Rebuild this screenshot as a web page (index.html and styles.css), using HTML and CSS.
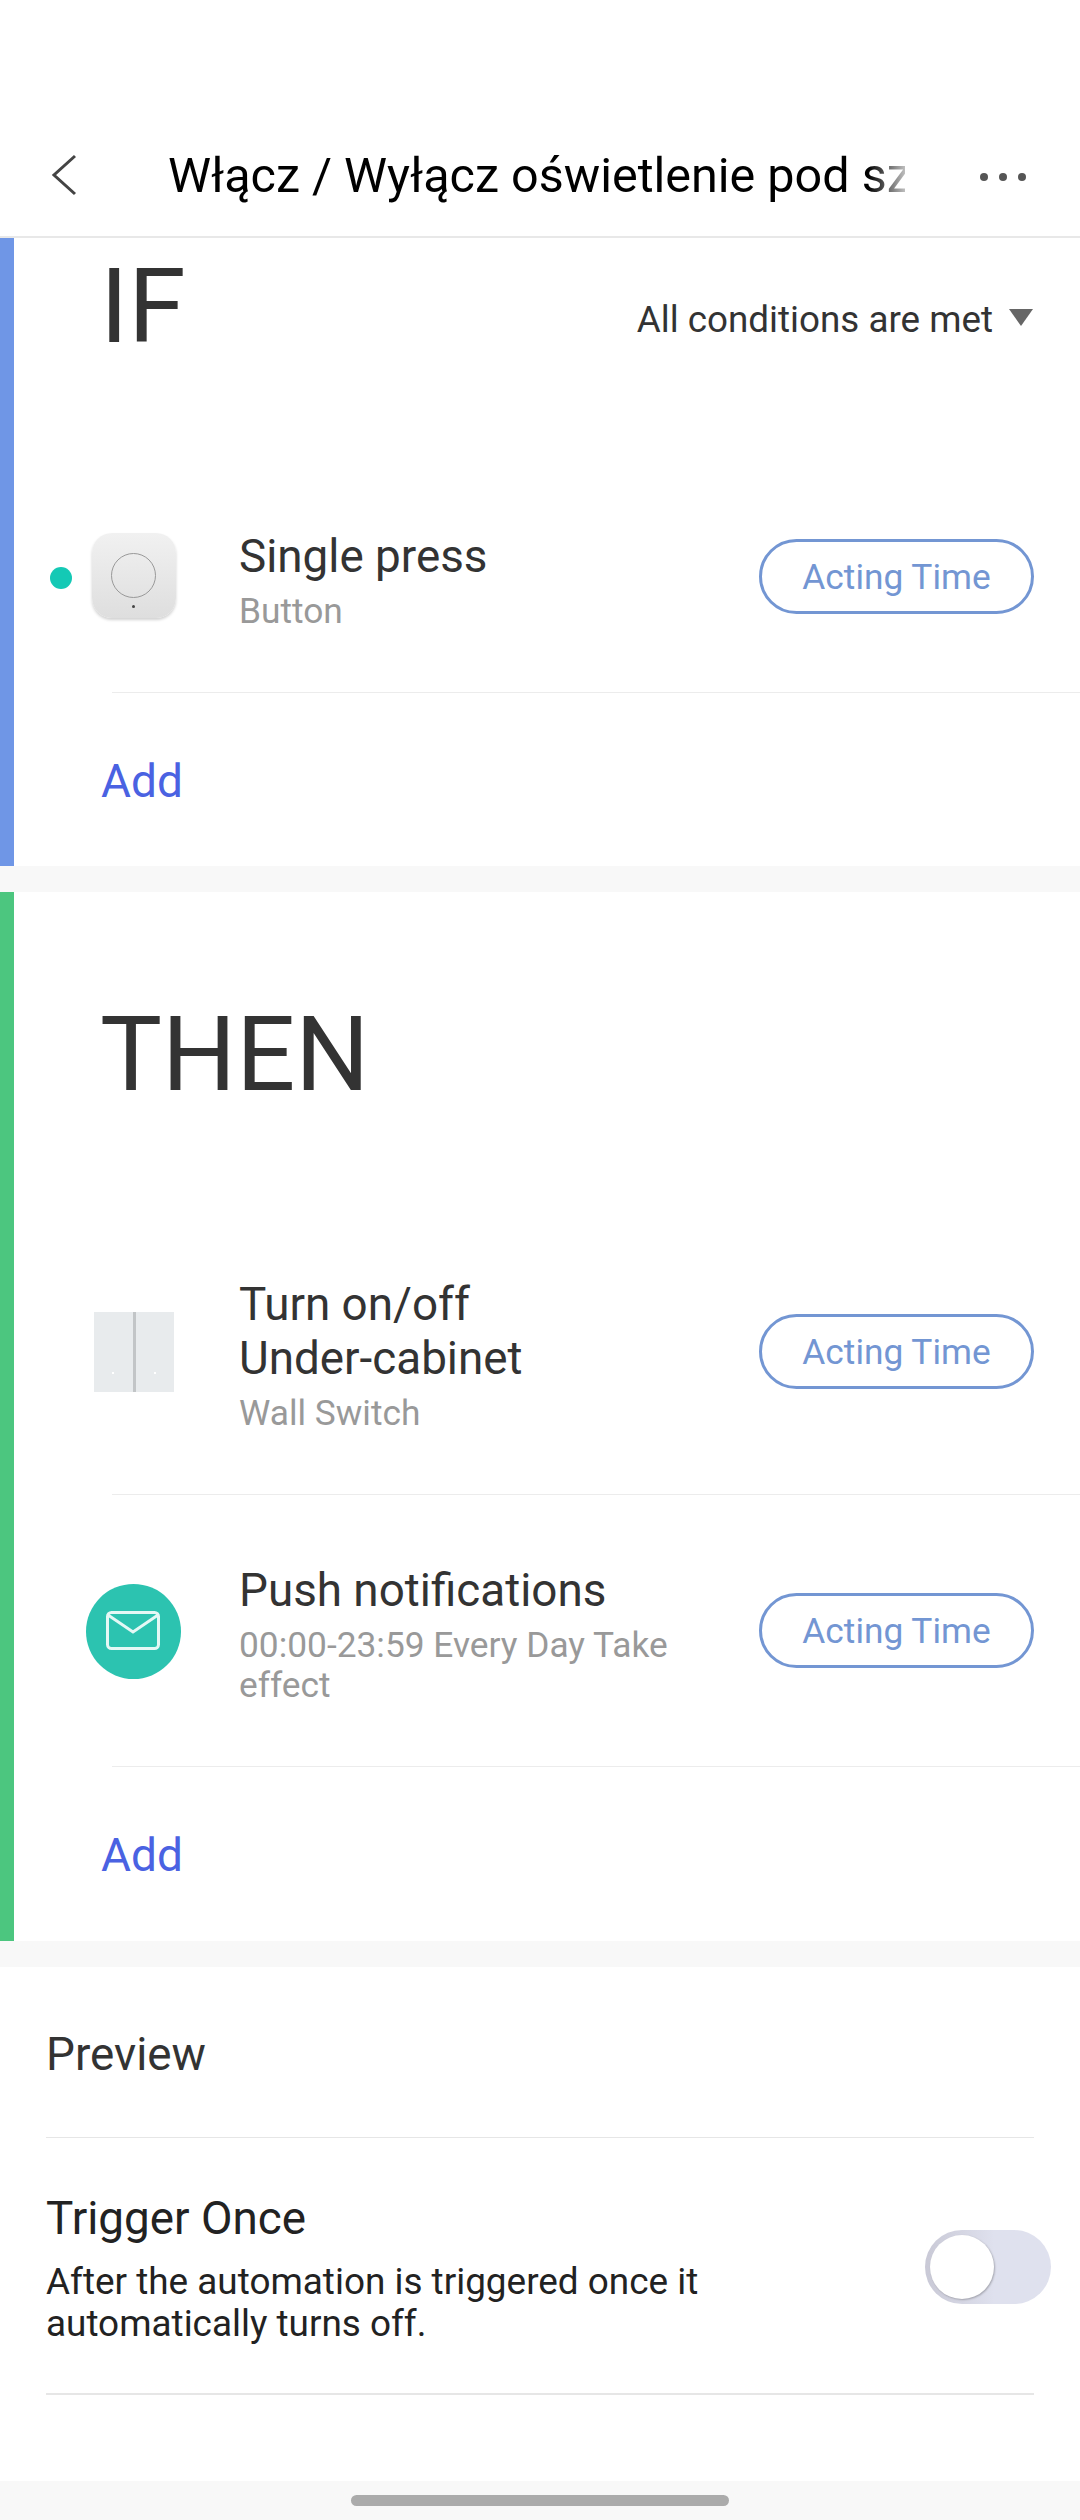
FILE: index.html
```html
<!DOCTYPE html>
<html lang="en">
  <head>
    <meta charset="UTF-8" />
    <title>Automation</title>
    <link rel="stylesheet" href="styles.css">
  </head>
  <body>
    <div class="page">
      <header class="topbar">
        <svg class="back" width="26" height="42" viewBox="0 0 26 42">
          <path d="M24 2 L3 21 L24 40" fill="none" stroke="#444" stroke-width="3" />
        </svg>
        <div class="title">Włącz / Wyłącz oświetlenie pod sz</div>
        <div class="more"><i></i><i></i><i></i></div>
      </header>

      <section class="block block-if">
        <div class="block-head head-if">
          <h1>IF</h1>
          <div class="condition">All conditions are met<span class="caret"></span></div>
        </div>
        <div class="row">
          <div class="dot-slot"><span class="dot"></span></div>
          <div class="icon-slot">
            <div class="btn-icon">
              <div class="btn-ring"></div>
              <div class="btn-led"></div>
            </div>
          </div>
          <div class="row-text">
            <div class="row-title">Single press</div>
            <div class="row-sub">Button</div>
          </div>
          <div class="acting">Acting Time</div>
        </div>
        <div class="divider"></div>
        <div class="add">Add</div>
      </section>

      <section class="block block-then">
        <div class="block-head head-then">
          <h1>THEN</h1>
        </div>
        <div class="row row-switch">
          <div class="dot-slot"></div>
          <div class="icon-slot">
            <div class="switch-icon">
              <div class="switch-key"><span></span></div>
              <div class="switch-key"><span></span></div>
            </div>
          </div>
          <div class="row-text">
            <div class="row-title">Turn on/off<br />Under-cabinet</div>
            <div class="row-sub">Wall Switch</div>
          </div>
          <div class="acting">Acting Time</div>
        </div>
        <div class="divider"></div>
        <div class="row row-notify">
          <div class="dot-slot"></div>
          <div class="icon-slot">
            <div class="mail-icon">
              <svg width="54" height="40" viewBox="0 0 54 40">
                <rect x="1.5" y="1.5" width="51" height="36" rx="4" fill="none" stroke="#e4f8f5" stroke-width="3" />
                <path d="M2 4 L27 21 L52 4" fill="none" stroke="#e4f8f5" stroke-width="3" />
              </svg>
            </div>
          </div>
          <div class="row-text">
            <div class="row-title">Push notifications</div>
            <div class="row-sub">00:00-23:59 Every Day Take effect</div>
          </div>
          <div class="acting">Acting Time</div>
        </div>
        <div class="divider"></div>
        <div class="add">Add</div>
      </section>

      <section class="options">
        <div class="preview">Preview</div>
        <div class="trigger">
          <div class="trigger-text">
            <div class="trigger-title">Trigger Once</div>
            <div class="trigger-desc">After the automation is triggered once it automatically turns off.</div>
          </div>
          <div class="toggle"><div class="knob"></div></div>
        </div>
      </section>

      <footer class="navbar"><div class="home"></div></footer>
    </div>
  </body>
</html>
```

FILE: styles.css
```css
* {
  box-sizing: border-box;
}
body {
  margin: 0;
  font-family: Roboto, "Noto Sans", sans-serif;
  color: #333333;
}
.page {
  width: 1080px;
  height: 2520px;
  display: flex;
  flex-direction: column;
  overflow: hidden;
  background-color: #f8f8f8;
}

/* top bar */
.topbar {
  height: 238px;
  padding: 114px 0 0 51px;
  display: flex;
  align-items: center;
  border-bottom: 2px solid #e8e8e8;
  background-color: #ffffff;
}
.back {
  flex: none;
}
.title {
  width: 737px;
  margin-left: 91px;
  font-size: 48.5px;
  color: #000000;
  white-space: nowrap;
  overflow: hidden;
  -webkit-mask-image: linear-gradient(to right, #000 95%, rgba(0, 0, 0, 0.25) 100%);
  mask-image: linear-gradient(to right, #000 95%, rgba(0, 0, 0, 0.25) 100%);
}
.more {
  margin: 3px 0 0 75px;
  display: flex;
  gap: 11px;
}
.more i {
  width: 8px;
  height: 8px;
  border-radius: 50%;
  background-color: #555555;
}

/* IF / THEN blocks */
.block {
  border-left: 14px solid #6f96e6;
  background-color: #ffffff;
}
.block-if {
  height: 628px;
}
.block-then {
  height: 1049px;
  margin-top: 26px;
  border-left-color: #4cc67f;
}
.block-head {
  display: flex;
  padding-left: 86px;
}
.block-head h1 {
  margin: 0;
  font-size: 104px;
  font-weight: 400;
  line-height: 122px;
}
.head-if {
  height: 225px;
  padding-top: 8px;
  justify-content: space-between;
}
.head-then {
  height: 318px;
  padding-top: 102px;
}
.condition {
  margin: 53px 47px 0 0;
  font-size: 36.8px;
  line-height: 42px;
  display: flex;
}
.caret {
  width: 0;
  height: 0;
  margin: 10px 0 0 16px;
  border-left: 12px solid transparent;
  border-right: 12px solid transparent;
  border-top: 17px solid #666666;
}
.row {
  height: 229px;
  padding-left: 36px;
  display: flex;
  align-items: center;
}
.row-switch {
  height: 284px;
}
.row-notify {
  height: 271px;
}
.row-notify .row-text {
  margin-top: 8px;
}
.row-notify .acting {
  margin-top: 0;
}
.row-notify .mail-icon {
  margin-top: 1px;
}
.dot-slot {
  width: 35px;
}
.dot {
  display: block;
  width: 22px;
  height: 22px;
  border-radius: 50%;
  background-color: #14c9b5;
}
.icon-slot {
  width: 96px;
  display: flex;
  justify-content: center;
}
.row-text {
  width: 520px;
  margin: 6px 0 0 58px;
}
.row-title {
  font-size: 45.8px;
  line-height: 54px;
  color: #333333;
}
.row-sub {
  width: 450px;
  margin-top: 7px;
  font-size: 35.3px;
  line-height: 40px;
  color: #999999;
}
.acting {
  width: 275px;
  height: 75px;
  margin-top: -2px;
  flex: none;
  border: 3px solid #7396d3;
  border-radius: 38px;
  font-size: 35.3px;
  line-height: 70px;
  text-align: center;
  color: #7396d3;
}
.divider {
  height: 1px;
  margin-left: 98px;
  background-color: #ececec;
}
.add {
  padding: 61px 0 0 87px;
  font-size: 46px;
  line-height: 54px;
  color: #4a62e2;
}

/* device pictures */
.btn-icon {
  width: 84px;
  height: 85px;
  margin: -4px 0 0 1px;
  border-radius: 20px;
  background: linear-gradient(#f1f1f1, #dedede);
  box-shadow: 0 2px 3px rgba(0, 0, 0, 0.18);
  display: flex;
  flex-direction: column;
  align-items: center;
}
.btn-ring {
  width: 45px;
  height: 45px;
  margin-top: 20px;
  border: 1px solid #999999;
  border-radius: 50%;
}
.btn-led {
  width: 3px;
  height: 3px;
  margin-top: 7px;
  border-radius: 50%;
  background-color: #444444;
}
.switch-icon {
  width: 80px;
  height: 80px;
  margin-left: 2px;
  display: flex;
  gap: 3px;
  background-color: #c2c5c7;
}
.switch-key {
  flex: 1;
  padding-bottom: 18px;
  display: flex;
  align-items: flex-end;
  justify-content: center;
  background-color: #e8ebed;
}
.switch-key span {
  width: 2px;
  height: 2px;
  background-color: #ffffff;
}
.mail-icon {
  width: 95px;
  height: 95px;
  border-radius: 50%;
  background-color: #2cc3b0;
  display: flex;
  align-items: center;
  justify-content: center;
}

/* bottom options */
.options {
  flex: 1;
  margin-top: 26px;
  padding: 0 46px;
  background-color: #ffffff;
}
.preview {
  height: 171px;
  padding-top: 63px;
  border-bottom: 1px solid #e6e6e6;
  font-size: 45.8px;
  line-height: 50px;
}
.trigger {
  height: 257px;
  padding-top: 55px;
  border-bottom: 2px solid #e6e6e6;
  display: flex;
  justify-content: space-between;
}
.trigger-title {
  font-size: 45.8px;
  line-height: 52px;
  color: #222222;
}
.trigger-desc {
  width: 680px;
  margin-top: 16px;
  font-size: 36.9px;
  line-height: 42px;
  color: #222222;
}
.toggle {
  width: 126px;
  height: 74px;
  margin: 37px -17px 0 0;
  padding: 5px;
  border-radius: 37px;
  background: linear-gradient(to right, #c9c9d6, #dfe1ee 55%);
}
.knob {
  width: 64px;
  height: 64px;
  border-radius: 50%;
  background-color: #ffffff;
  box-shadow: 1px 1px 2px rgba(0, 0, 0, 0.25);
}
.navbar {
  height: 39px;
  padding-top: 14px;
  display: flex;
  justify-content: center;
}
.home {
  width: 378px;
  height: 11px;
  border-radius: 6px;
  background-color: #ababab;
}
```
